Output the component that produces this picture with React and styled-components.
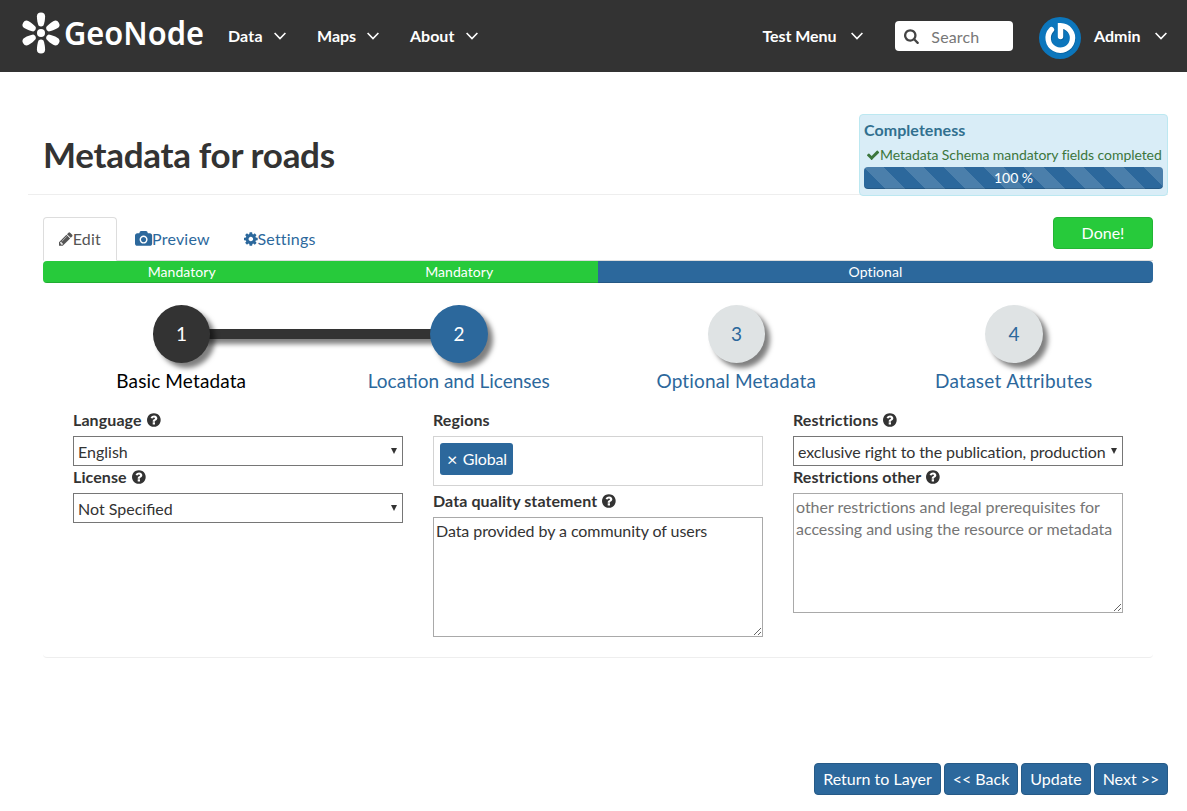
import React from "react";
import styled, { createGlobalStyle, css } from "styled-components";

const GlobalStyle = createGlobalStyle`
  *, *::before, *::after { box-sizing: border-box; }
  body {
    margin: 0;
    background: #fff;
    color: #333;
    font-family: Lato, "Liberation Sans", sans-serif;
    font-size: 16px;
    line-height: 22px;
  }
`;

const BLUE = "#2c689c";
const GREEN = "#27ca3b";

/* ---------- icons ---------- */

const GLYPHS = {
  check: {
    box: [121, 0, 1550, 1792],
    d: "M1671 566q0 40-28 68l-724 724-136 136q-28 28-68 28t-68-28l-136-136-362-362q-28-28-28-68t28-68l136-136q28-28 68-28t68 28l294 295 656-657q28-28 68-28t68 28l136 136q28 28 28 68z",
  },
  question: {
    box: [128, 0, 1536, 1792],
    d: "M1024 1376v-192q0-14-9-23t-23-9h-192q-14 0-23 9t-9 23v192q0 14 9 23t23 9h192q14 0 23-9t9-23zm256-672q0-88-55.5-163t-138.5-116-170-41q-243 0-371 213-15 24 8 42l132 100q7 6 19 6 16 0 25-12 53-68 86-92 34-24 86-24 48 0 85.5 26t37.5 59q0 38-20 61t-68 45q-63 28-115.5 86.500t-52.500 125.500v36q0 14 9 23t23 9h192q14 0 23-9t9-23q0-19 21.500-49.500t54.500-49.500q32-18 49-28.500t46-35 44.500-48 28-60.500 12.500-81zm384 192q0 209-103 385.500t-279.500 279.500-385.500 103-385.500-103-279.500-279.500-103-385.500 103-385.500 279.500-279.500 385.500-103 385.500 103 279.500 279.500 103 385.500z",
  },
  pencil: {
    box: [128, 0, 1536, 1792],
    d: "M491 1536l91-91-235-235-91 91v107h128v128h107zm523-928q0-22-22-22-10 0-17 7l-542 542q-7 7-7 17 0 22 22 22 10 0 17-7l542-542q7-7 7-17zm-54-192l416 416-832 832h-416v-416zm683 96q0 53-37 90l-166 166-416-416 166-165q36-38 90-38 53 0 91 38l235 234q37 39 37 91z",
  },
  camera: {
    box: [0, 0, 1920, 1792],
    d: "M960 672q119 0 203.500 84.500t84.500 203.500-84.500 203.500-203.500 84.500-203.500-84.500-84.500-203.500 84.500-203.500 203.500-84.500zm704-416q106 0 181 75t75 181v896q0 106-75 181t-181 75h-1408q-106 0-181-75t-75-181v-896q0-106 75-181t181-75h224l51-136q19-49 69.500-84.500t103.500-35.500h512q53 0 103.500 35.500t69.500 84.500l51 136h224zm-704 1152q185 0 316.500-131.500t131.500-316.500-131.500-316.500-316.500-131.500-316.500 131.500-131.500 316.500 131.500 316.500 316.500 131.500z",
  },
  cog: {
    box: [128, 0, 1536, 1792],
    d: "M1152 896q0-106-75-181t-181-75-181 75-75 181 75 181 181 75 181-75 75-181zm512-109v222q0 12-8 23t-20 13l-185 28q-19 54-39 91 35 50 107 138 10 12 10 25t-9 23q-27 37-99 108t-94 71q-12 0-26-9l-138-108q-44 23-91 38-16 136-29 186-7 28-36 28h-222q-14 0-24.500-8.500t-11.500-21.500l-28-184q-49-16-90-37l-141 107q-10 9-25 9-14 0-25-11-126-114-165-168-7-10-7-23 0-12 8-23 15-21 51-66.500t54-70.500q-27-50-41-99l-183-27q-13-2-21-12.500t-8-23.500v-222q0-12 8-23t19-13l186-28q14-46 39-92-40-57-107-138-10-12-10-24 0-10 9-23 26-36 98.500-107.500t94.500-71.500q13 0 26 10l138 107q44-23 91-38 16-136 29-186 7-28 36-28h222q14 0 24.500 8.500t11.500 21.500l28 184q49 16 90 37l142-107q9-9 24-9 13 0 25 10 129 119 165 170 7 8 7 22 0 12-8 23-15 21-51 66.500t-54 70.500q26 50 41 98l183 28q13 2 21 12.500t8 23.500z",
  },
  search: {
    box: [64, 0, 1664, 1792],
    d: "M1216 832q0-185-131.500-316.500t-316.500-131.500-316.500 131.500-131.500 316.500 131.500 316.500 316.500 131.500 316.500-131.500 131.500-316.500zm512 832q0 52-38 90t-90 38q-54 0-90-38l-343-342q-179 124-399 124-143 0-273.500-55.500t-225-150-150-225-55.500-273.500 55.500-273.500 150-225 225-150 273.500-55.500 273.500 55.500 225 150 150 225 55.500 273.500q0 220-124 399l343 343q37 37 37 90z",
  },
};

const Svg = styled.svg`
  display: block;
  flex: none;
  overflow: visible;
`;

function Glyph({ name, size = 16 }) {
  const { box, d } = GLYPHS[name];
  return (
    <Svg width={(box[2] / box[3]) * size} height={size} viewBox={box.join(" ")} fill="currentColor">
      <path d={d} />
    </Svg>
  );
}

function Chevron() {
  return (
    <Svg width="12" height="8" viewBox="0 0 12 8" fill="none" stroke="#fff" strokeWidth="1.6">
      <path d="M0.6 1 6 6.6 11.4 1" />
    </Svg>
  );
}

/* ---------- top bar ---------- */

const TopBar = styled.header`
  display: flex;
  align-items: center;
  height: 72px;
  padding: 0 20px 0 21px;
  background: #333;
  color: #fff;
`;

const NavItem = styled.a`
  display: flex;
  align-items: center;
  justify-content: space-between;
  width: ${(p) => p.$width}px;
  margin-left: ${(p) => p.$gap}px;
  font-weight: 700;
  letter-spacing: ${(p) => p.$tracking || 0}px;
`;

const Spacer = styled.div`
  flex: 1;
`;

const SearchBox = styled.div`
  display: flex;
  align-items: center;
  gap: 13px;
  width: 118px;
  height: 30px;
  margin-left: 32px;
  padding-left: 8.500px;
  border-radius: 4px;
  background: #fff;
  color: #777;
  letter-spacing: 0.15px;

  svg { color: #444; }
  span { padding-top: 2px; }
`;

const AvatarSlot = styled.div`
  margin: 4px 0 0 26px;
`;

function Logo() {
  return (
    <Svg width="184" height="44" viewBox="0 0 184 44" fill="#fff">
      <g transform="translate(20 19)">
        <circle r="4" />
        {[0, 60, 120, 180, 240, 300].map((angle) => (
          <path
            key={angle}
            transform={`rotate(${angle})`}
            d="M-2.500-7.500C-3.400-10-4.100-13.500-4.100-16.500A4.100 4.100 0 0 1 4.100-16.500C4.100-13.500 3.400-10 2.500-7.500Q0-5.400-2.500-7.500Z"
          />
        ))}
      </g>
      <text
        x="43"
        y="31"
        fontFamily='"Noto Sans", "Open Sans", sans-serif'
        fontSize="32"
        fontWeight="600"
        textLength="140"
        lengthAdjust="spacingAndGlyphs"
      >
        GeoNode
      </text>
    </Svg>
  );
}

function Avatar() {
  return (
    <Svg width="42" height="42" viewBox="0 0 42 42" fill="none" strokeLinecap="round">
      <circle cx="21" cy="21" r="21" fill="#0c76bc" />
      <g stroke="#07568c" strokeOpacity=".55" strokeWidth="5.6" transform="translate(.8 1)">
        <path d="M12.500 12.600A12 12 0 1 0 21.500 9V19.500" />
      </g>
      <path d="M12.500 12.600A12.200 12.200 0 1 0 21.500 8.800V19.500" stroke="#fff" strokeWidth="5.400" />
    </Svg>
  );
}

/* ---------- page heading ---------- */

const Page = styled.main`
  padding: 42px 19px 0 28px;
`;

const Heading = styled.div`
  display: flex;
  justify-content: space-between;
  height: 81px;
  padding-left: 15px;
  border-bottom: 1px solid #eee;
`;

const Title = styled.h1`
  margin: 20px 0 0;
  font-size: 35px;
  line-height: 40px;
  font-weight: 700;
  letter-spacing: -0.3px;
`;

const CompletenessBox = styled.section`
  width: 309px;
  height: 82px;
  padding: 4px 4px 0;
  border: 1px solid #bce8f1;
  border-radius: 4px;
  background: #d9edf7;
  color: #31708f;
`;

const BoxTitle = styled.div`
  font-weight: 700;
  letter-spacing: 0.06px;
`;

const SchemaStatus = styled.div`
  display: flex;
  align-items: center;
  gap: 1px;
  height: 20px;
  margin-top: 4px;
  padding-left: 3px;
  color: #3c763d;
  font-size: 14px;
  letter-spacing: -0.07px;
  white-space: nowrap;
`;

const StripedBar = styled.div`
  height: 22px;
  margin-top: 2px;
  border-radius: 4px;
  background-color: ${BLUE};
  background-image: linear-gradient(
    45deg,
    rgba(255, 255, 255, 0.15) 25%,
    transparent 25%,
    transparent 50%,
    rgba(255, 255, 255, 0.15) 50%,
    rgba(255, 255, 255, 0.15) 75%,
    transparent 75%,
    transparent
  );
  background-size: 40px 40px;
  box-shadow: inset 0 -1px 0 rgba(0, 0, 0, 0.15);
  color: #fff;
  font-size: 14px;
  text-align: center;
`;

/* ---------- tabs ---------- */

const Content = styled.div`
  padding: 22px 15px 0;
`;

const TabRow = styled.nav`
  display: flex;
  height: 44px;
  border-bottom: 1px solid #ddd;
`;

const Tab = styled.a`
  display: flex;
  align-items: center;
  height: 44px;
  margin-right: 2px;
  padding: 0 15px;
  border: 1px solid transparent;
  border-radius: 4px 4px 0 0;
  color: ${BLUE};
  letter-spacing: 0.2px;
  ${(p) =>
    p.$active &&
    css`
      border-color: #ddd;
      border-bottom-color: #fff;
      background: #fff;
      color: #555;
    `}
`;

const Button = styled.button`
  height: 32px;
  padding: 0;
  border: 1px solid ${(p) => (p.$green ? "#23b535" : "#265a87")};
  border-radius: 4px;
  background: ${(p) => (p.$green ? GREEN : BLUE)};
  color: #fff;
  font: inherit;
  white-space: nowrap;
  width: ${(p) => p.$width}px;
`;

const StageBar = styled.div`
  display: flex;
  height: 22px;
  border-radius: 4px;
  overflow: hidden;
`;

const Stage = styled.div`
  flex: ${(p) => p.$span};
  background: ${(p) => (p.$done ? GREEN : BLUE)};
  box-shadow: inset 0 -1px 0 rgba(0, 0, 0, 0.15);
  color: #fff;
  font-size: 14px;
  letter-spacing: 0.08px;
  text-align: center;
`;

/* ---------- steps ---------- */

const Steps = styled.ol`
  display: grid;
  grid-template-columns: repeat(4, 1fr);
  margin: 22px 0 0;
  padding: 0;
  list-style: none;
`;

const stepColors = {
  done: ["#333", "#fff", "#000"],
  current: [BLUE, "#fff", BLUE],
  pending: ["#dfe3e4", BLUE, BLUE],
};

const StepItem = styled.li`
  position: relative;
  display: flex;
  flex-direction: column;
  align-items: center;
  color: ${(p) => stepColors[p.$state][2]};
  font-size: 19px;
`;

const StepCircle = styled.span`
  position: relative;
  z-index: 1;
  width: 57.6px;
  height: 58px;
  margin-right: 0.6px;
  border-radius: 50%;
  background: ${(p) => stepColors[p.$state][0]};
  color: ${(p) => stepColors[p.$state][1]};
  box-shadow: 5px 5px 5px rgba(0, 0, 0, 0.5);
  line-height: 58px;
  text-align: center;
`;

const Connector = styled.span`
  position: absolute;
  top: 24px;
  left: 50%;
  width: 100%;
  height: 10px;
  background: #333;
  box-shadow: 5px 5px 5px rgba(0, 0, 0, 0.5);
`;

const StepLabel = styled.span`
  margin: 7px 1px 0 0;
  letter-spacing: ${(p) => p.$tracking}px;
  white-space: nowrap;
`;

/* ---------- form ---------- */

const Form = styled.form`
  display: grid;
  grid-template-columns: repeat(3, 330px);
  gap: 30px;
  height: 266px;
  padding: 17px 30px 0;
  border-bottom: 1px solid #eee;
  border-radius: 0 0 4px 4px;
`;

const Column = styled.div`
  display: flex;
  flex-direction: column;
`;

const Label = styled.label`
  display: flex;
  align-items: center;
  gap: 5px;
  height: 22px;
  margin: ${(p) => p.$top || 0}px 0 5px;
  font-weight: 700;
  letter-spacing: 0.09px;
`;

const SelectBox = styled.div`
  display: flex;
  justify-content: space-between;
  height: 30px;
  padding: 4px 5px 0 4px;
  border: 1px solid #767676;
  background: #fff;
`;

const SelectValue = styled.span`
  width: 310px;
  overflow: hidden;
  letter-spacing: ${(p) => (p.$long ? -0.1 : 0)}px;
  white-space: nowrap;
`;

const Arrow = styled.span`
  width: 0;
  height: 0;
  margin-top: 7px;
  border: 3.5px solid transparent;
  border-top: 6.5px solid #333;
  border-bottom: 0;
`;

const TagBox = styled.div`
  height: 50px;
  padding: 6px;
  border: 1px solid #d3d3d3;
`;

const Tag = styled.span`
  display: flex;
  align-items: center;
  justify-content: space-between;
  width: 73px;
  height: 32px;
  padding: 0 6px 0 7px;
  border-radius: 3px;
  background: ${BLUE};
  color: #fff;
  letter-spacing: -0.15px;
`;

const TagRemove = styled.span`
  font-size: 18px;
`;

const TextArea = styled.textarea`
  display: block;
  width: 330px;
  height: 120px;
  margin: 0;
  padding: 2px;
  border: 1px solid #a9a9a9;
  border-radius: 0;
  color: #333;
  font: inherit;
  letter-spacing: -0.07px;
  line-height: 22px;
  &::placeholder { color: #757575; letter-spacing: -0.03px; }
`;

const Actions = styled.footer`
  display: flex;
  justify-content: flex-end;
  gap: 3px;
  margin-top: 105px;
`;

function HelpLabel({ children, top }) {
  return (
    <Label $top={top}>
      {children}
      <Glyph name="question" />
    </Label>
  );
}

function Select({ value }) {
  return (
    <SelectBox>
      <SelectValue $long={value.length > 30}>{value}</SelectValue>
      <Arrow />
    </SelectBox>
  );
}

const STEPS = [
  { label: "Basic Metadata", state: "done", tracking: 0.13 },
  { label: "Location and Licenses", state: "current", tracking: 0 },
  { label: "Optional Metadata", state: "pending", tracking: 0.16 },
  { label: "Dataset Attributes", state: "pending", tracking: 0.27 },
];

export default function App() {
  return (
    <>
      <GlobalStyle />
      <TopBar>
        <Logo />
        <NavItem $gap={23} $width={58} $tracking={0.15}>Data<Chevron /></NavItem>
        <NavItem $gap={31} $width={62}>Maps<Chevron /></NavItem>
        <NavItem $gap={31} $width={68}>About<Chevron /></NavItem>
        <Spacer />
        <NavItem $gap={0} $width={100.5} $tracking={-0.06}>Test Menu<Chevron /></NavItem>
        <SearchBox>
          <Glyph name="search" />
          <span>Search</span>
        </SearchBox>
        <AvatarSlot><Avatar /></AvatarSlot>
        <NavItem $gap={13} $width={73}>Admin<Chevron /></NavItem>
      </TopBar>

      <Page>
        <Heading>
          <Title>Metadata for roads</Title>
          <CompletenessBox>
            <BoxTitle>Completeness</BoxTitle>
            <SchemaStatus>
              <Glyph name="check" size={14} />
              Metadata Schema mandatory fields completed
            </SchemaStatus>
            <StripedBar>100 %</StripedBar>
          </CompletenessBox>
        </Heading>

        <Content>
          <TabRow>
            <Tab $active><Glyph name="pencil" />Edit</Tab>
            <Tab><Glyph name="camera" />Preview</Tab>
            <Tab><Glyph name="cog" />Settings</Tab>
            <Spacer />
            <Button $green $width={100}>Done!</Button>
          </TabRow>
          <StageBar>
            <Stage $span={1} $done>Mandatory</Stage>
            <Stage $span={1} $done>Mandatory</Stage>
            <Stage $span={2}>Optional</Stage>
          </StageBar>

          <Steps>
            {STEPS.map(({ label, state, tracking }, i) => (
              <StepItem key={label} $state={state}>
                {state === "done" && <Connector />}
                <StepCircle $state={state}>{i + 1}</StepCircle>
                <StepLabel $tracking={tracking}>{label}</StepLabel>
              </StepItem>
            ))}
          </Steps>

          <Form>
            <Column>
              <HelpLabel>Language</HelpLabel>
              <Select value="English" />
              <HelpLabel>License</HelpLabel>
              <Select value="Not Specified" />
            </Column>
            <Column>
              <Label>Regions</Label>
              <TagBox><Tag><TagRemove>×</TagRemove>Global</Tag></TagBox>
              <HelpLabel top={4}>Data quality statement</HelpLabel>
              <TextArea defaultValue="Data provided by a community of users" />
            </Column>
            <Column>
              <HelpLabel>Restrictions</HelpLabel>
              <Select value="exclusive right to the publication, production" />
              <HelpLabel>Restrictions other</HelpLabel>
              <TextArea placeholder="other restrictions and legal prerequisites for accessing and using the resource or metadata" />
            </Column>
          </Form>
        </Content>

        <Actions>
          <Button $width={127}>Return to Layer</Button>
          <Button $width={74}>&lt;&lt; Back</Button>
          <Button $width={70}>Update</Button>
          <Button $width={74}>Next &gt;&gt;</Button>
        </Actions>
      </Page>
    </>
  );
}
